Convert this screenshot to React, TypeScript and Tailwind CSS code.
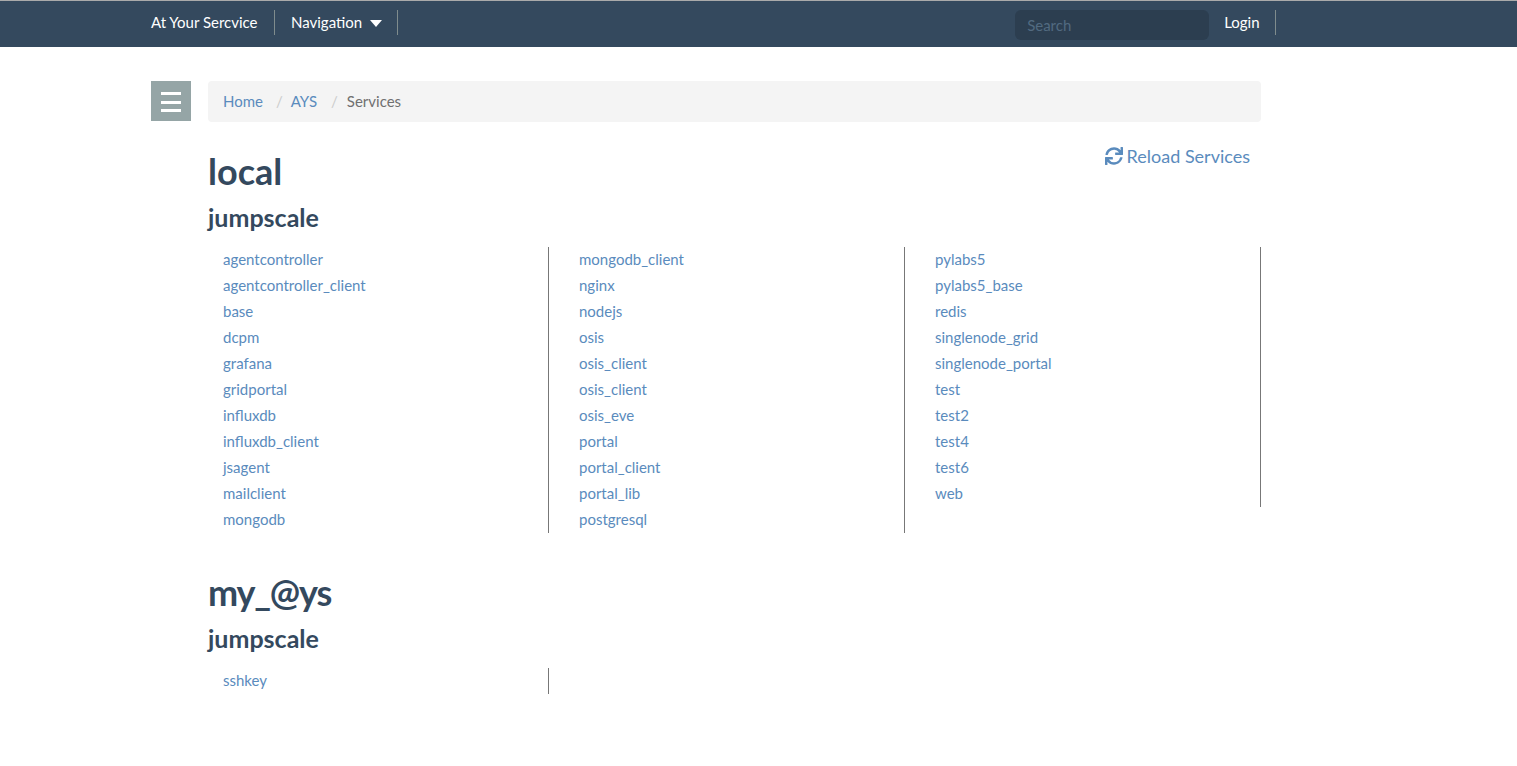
import { FaSync } from 'react-icons/fa';

const columns = [
  ['agentcontroller', 'agentcontroller_client', 'base', 'dcpm', 'grafana', 'gridportal', 'influxdb', 'influxdb_client', 'jsagent', 'mailclient', 'mongodb'],
  ['mongodb_client', 'nginx', 'nodejs', 'osis', 'osis_client', 'osis_client', 'osis_eve', 'portal', 'portal_client', 'portal_lib', 'postgresql'],
  ['pylabs5', 'pylabs5_base', 'redis', 'singlenode_grid', 'singlenode_portal', 'test', 'test2', 'test4', 'test6', 'web'],
];

const ServiceColumn = ({ items }: { items: string[] }) => (
  <ul className="w-[356px] border-r border-[#777] pl-[30px]">
    {items.map((item, index) => (
      <li key={index} className="h-[26px] text-[15px] leading-[24px] text-[#5a8bbd]">
        {item}
      </li>
    ))}
  </ul>
);

const Divider = () => <div className="h-[25px] w-px bg-[#7f8c8d]" />;

export default function App() {
  return (
    <div className="min-h-[766px] bg-white font-['Lato','Noto_Sans',sans-serif]">
      <nav className="h-[47px] border-t border-[#aaa] bg-[#34495e] text-[15px] text-white">
        <div className="mx-auto flex h-[46px] w-[1215px] items-start">
          <span className="mt-[9px] w-[123px] leading-[24px] whitespace-nowrap">At Your Sercvice</span>
          <div className="mt-[9px]"><Divider /></div>
          <span className="mt-[9px] ml-4 leading-[24px]">Navigation</span>
          <span className="mt-[19px] ml-2 h-0 w-0 border-x-[6px] border-t-[7px] border-x-transparent border-t-white" />
          <div className="mt-[9px] ml-[15px]"><Divider /></div>
          <div className="mt-[9px] ml-[617px] flex h-[30px] w-[194px] items-center rounded-md bg-[#2c3e50] pl-3 text-[#526a80]">
            Search
          </div>
          <span className="mt-[9px] ml-[15px] leading-[24px]">Login</span>
          <div className="mt-[9px] ml-[15px]"><Divider /></div>
        </div>
      </nav>

      <div className="mx-auto flex w-[1215px] items-start pt-[34px]">
        <div className="flex h-10 w-10 shrink-0 flex-col justify-between bg-[#95a5a6] px-[10px] pt-[11px] pb-[9px]">
          <div className="h-[3px] bg-white" />
          <div className="h-[3px] bg-white" />
          <div className="h-[3px] bg-white" />
        </div>
        <main className="ml-[17px] w-[1053px]">
          <div className="flex h-[41px] items-center rounded bg-[#f4f4f4] px-[15px] text-[15px]">
            <span className="text-[#5a8bbd]">Home</span>
            <span className="mr-2 ml-[13px] text-[#ccc]">/</span>
            <span className="text-[#5a8bbd]">AYS</span>
            <span className="mr-[9px] ml-[14px] text-[#ccc]">/</span>
            <span className="text-[#707070]">Services</span>
          </div>

          <div className="relative">
            <div className="absolute top-[21px] right-[11px] flex items-center gap-1 text-[18px] leading-[26px] text-[#5a8bbd]">
              <FaSync className="h-[18px] w-[18px]" />
              <span>Reload Services</span>
            </div>
            <h1 className="pt-[27px] text-[36px] leading-[44px] font-bold text-[#34495e]">local</h1>
            <h2 className="mt-[9px] text-[25px] leading-[30px] font-bold text-[#34495e]">jumpscale</h2>
            <div className="mt-[15px] -ml-[15px] flex items-start">
              {columns.map((items, index) => (
                <ServiceColumn key={index} items={items} />
              ))}
            </div>

            <h1 className="mt-[37px] text-[36px] leading-[44px] font-bold tracking-[-1.2px] text-[#34495e]">my_@ys</h1>
            <h2 className="mt-[9px] text-[25px] leading-[30px] font-bold text-[#34495e]">jumpscale</h2>
            <div className="mt-[15px] -ml-[15px] flex items-start">
              <ServiceColumn items={['sshkey']} />
            </div>
          </div>
        </main>
      </div>
    </div>
  );
}
